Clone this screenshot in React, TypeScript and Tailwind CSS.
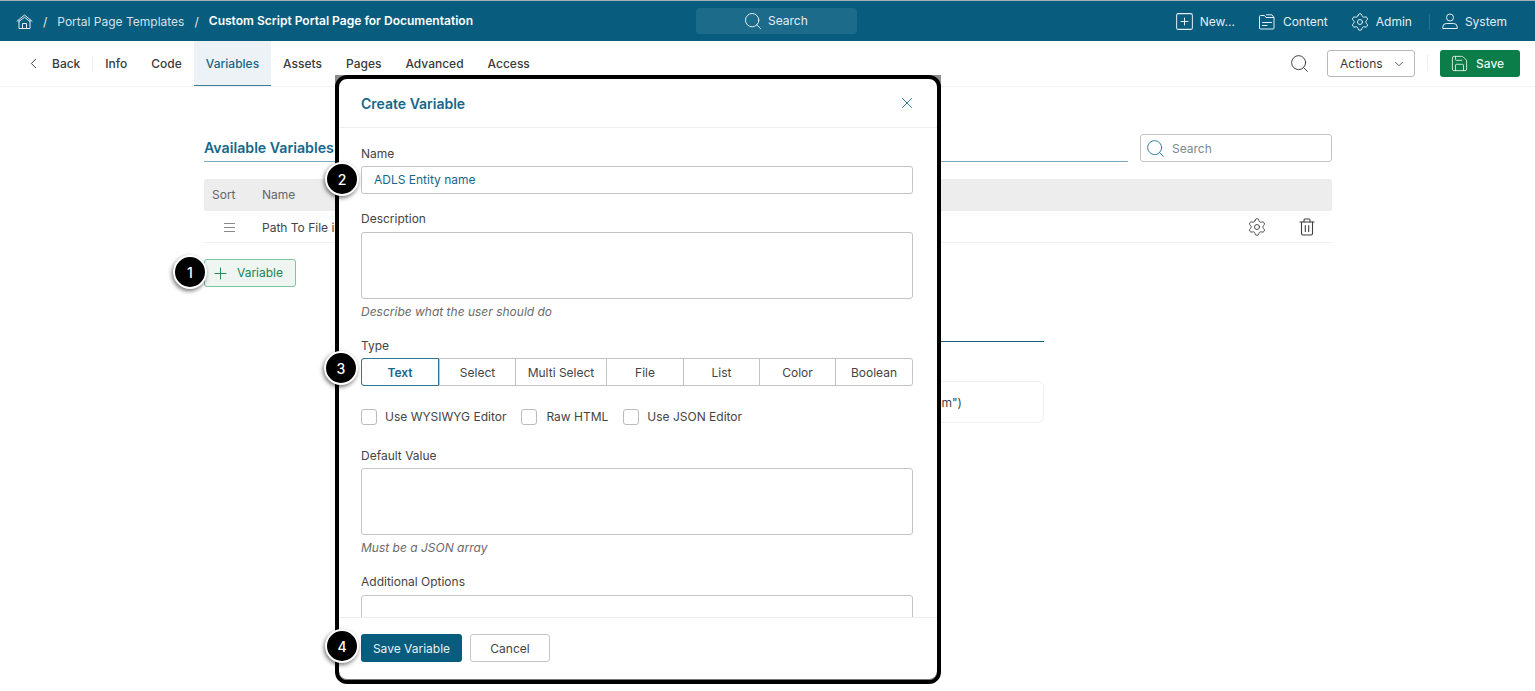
import React from "react";
import { ChevronDown, ChevronLeft, Plus, Save, Search, Settings, SquarePlus, X } from "lucide-react";

function HomeIcon() {
  return (
    <svg width="17" height="16" viewBox="0 0 17 16" fill="none" stroke="currentColor" strokeWidth="1" strokeLinejoin="round" strokeLinecap="round">
      <path d="M1 7.2 8.5 1 16 7.2" />
      <path d="M3 7.6 8.5 3.2 14 7.6" />
      <path d="M3 6.5V14.5H14V6.5" />
      <path d="M6.5 14.5V9.5H10.5V14.5" />
    </svg>
  );
}

function ContentIcon() {
  return (
    <svg width="16" height="16" viewBox="0 0 16 16" fill="none" stroke="currentColor" strokeWidth="1" strokeLinejoin="round" strokeLinecap="round" className="ml-6">
      <path d="M.5 14V2.5a1 1 0 0 1 1-1h4l1.5 2h8v10.5a1 1 0 0 1-1 1h-12.5a1 1 0 0 1-1-1Z" />
      <path d="M7.5 .8h5.5l2 2.7" />
      <path d="M3.5 8.5h9M3.5 11.5h4.5" />
    </svg>
  );
}

function UserIcon() {
  return (
    <svg width="16" height="17" viewBox="0 0 16 17" fill="none" stroke="currentColor" strokeWidth="1" strokeLinejoin="round" className="ml-3">
      <circle cx="8" cy="4.5" r="3.5" />
      <path d="M.8 15.5v-1.5a3.5 3.5 0 0 1 3.5-3.5h7.4a3.5 3.5 0 0 1 3.5 3.5v1.5Z" />
    </svg>
  );
}

function TrashIcon() {
  return (
    <svg width="16" height="18" viewBox="0 0 16 18" fill="none" stroke="currentColor" strokeWidth="1.1" strokeLinejoin="round" strokeLinecap="round">
      <path d="M1 4h14" />
      <path d="M5 4V2a1 1 0 0 1 1-1h4a1 1 0 0 1 1 1v2" />
      <path d="M2.5 4v11.5a1.5 1.5 0 0 0 1.5 1.5h8a1.5 1.5 0 0 0 1.5-1.5V4" />
      <path d="M6.3 7.5v6M9.7 7.5v6" />
    </svg>
  );
}

function Badge({ n, className }: { n: string; className: string }) {
  return (
    <div className={"absolute flex h-[34px] w-[34px] items-center justify-center rounded-full border-2 border-white bg-black text-[14px] font-medium text-white shadow-[-1px_2px_4px_rgba(0,0,0,0.55)] " + className}>
      {n}
    </div>
  );
}

function TopBar() {
  return (
    <div className="flex h-[41px] items-center border-t border-[#a9b1b4] bg-[#085c7e] text-[12px] text-[#e4edf1]">
      <div className="flex w-[696px] shrink-0 items-center pl-4 pt-px">
        <HomeIcon />
        <span className="ml-[10px]">/</span>
        <span className="ml-[10px] text-[#d4e2e8]">Portal Page Templates</span>
        <span className="ml-[10px]">/</span>
        <span className="ml-[10px] text-[12.05px] font-semibold text-white">Custom Script Portal Page for Documentation</span>
      </div>
      <div className="flex h-[26px] w-[161px] items-center gap-[5px] rounded bg-[#1d6b8b] pl-[47px]">
        <Search size={20} strokeWidth={1.2} />
        <span>Search</span>
      </div>
      <div className="flex flex-1 items-center justify-end pr-[28px] pt-px">
        <SquarePlus size={21} strokeWidth={1.15} />
        <span className="ml-[5px]">New...</span>
        <ContentIcon />
        <span className="ml-2">Content</span>
        <Settings size={20} strokeWidth={1.2} className="ml-[22px]" />
        <span className="ml-[6px]">Admin</span>
        <span className="ml-[17px] h-4 w-px bg-[#2b7291]" />
        <UserIcon />
        <span className="ml-[7px]">System</span>
      </div>
    </div>
  );
}

function Tab({ label, active }: { label: string; active?: boolean }) {
  return (
    <div className={"flex h-full items-center border-b px-3 pt-[2px] " + (active ? "border-[#3d7f9c] bg-[#edf2f6] text-[#17678a]" : "border-transparent")}>
      {label}
    </div>
  );
}

function TabBar() {
  return (
    <div className="flex h-[46px] items-center border-b border-[#f1f1f1] bg-white text-[12px] font-medium text-[#3a3a3a]">
      <ChevronLeft size={17} strokeWidth={1.4} className="ml-[25px]" />
      <span className="ml-[10px] pt-px">Back</span>
      <span className="ml-[12px] h-4 w-px bg-[#eeeeee]" />
      <Tab label="Info" />
      <Tab label="Code" />
      <Tab label="Variables" active />
      <Tab label="Assets" />
      <Tab label="Pages" />
      <Tab label="Advanced" />
      <Tab label="Access" />
      <div className="mb-px flex flex-1 items-center justify-end pr-[15px] font-normal">
        <Search size={21} strokeWidth={1.1} />
        <div className="ml-[17px] flex h-[27px] w-[88px] items-center gap-[9px] rounded-[3px] border border-[#b8b8b8] pl-3 pt-px">
          Actions
          <ChevronDown size={14} strokeWidth={1.4} />
        </div>
        <span className="ml-3 h-4 w-px bg-[#eeeeee]" />
        <div className="ml-3 flex h-[27px] w-[80px] items-center gap-[7px] rounded-[3px] bg-[#0b7d49] pl-[10px] pt-px font-medium text-[#eaf5ef]">
          <Save size={19} strokeWidth={1.1} />
          Save
        </div>
      </div>
    </div>
  );
}

function Background() {
  return (
    <div className="ml-[204px] w-[1128px] pt-[47px] text-[12px] text-[#444444]">
      <div className="flex items-start gap-3">
        <div className="flex h-7 flex-1 items-center border-b border-[#7fa9bd] pt-px text-[14.2px] font-semibold text-[#17678a]">Available Variables</div>
        <div className="flex h-7 w-[192px] items-center gap-[6px] rounded-[3px] border border-[#c4c4c4] pl-1 pt-px text-[#7b8a92]">
          <Search size={21} strokeWidth={1.1} className="text-[#2e7a99]" />
          Search
        </div>
      </div>
      <div className="mt-[17px] flex h-8 items-center rounded-[2px] bg-[#ededed] text-[#666666]">
        <span className="ml-2 w-[50px]">Sort</span>
        <span>Name</span>
      </div>
      <div className="flex h-8 items-center border-b border-[#f1f1f1] pt-px">
        <div className="ml-[20px] flex w-[38px] flex-col gap-[3px]">
          <span className="h-px w-[11px] bg-[#8a8a8a]" />
          <span className="h-px w-[11px] bg-[#8a8a8a]" />
          <span className="h-px w-[11px] bg-[#8a8a8a]" />
        </div>
        <span className="pt-px">Path To File in</span>
        <div className="ml-auto flex items-center gap-[32px] pr-[17px] text-[#3f3f3f]">
          <Settings size={20} strokeWidth={1.1} />
          <TrashIcon />
        </div>
      </div>
      <div className="mt-4 flex h-7 w-[92px] items-center gap-[7px] rounded-[3px] border border-[#7fc3a1] bg-[#eff6f2] pl-[6px] text-[#1c8553]">
        <Plus size={19} strokeWidth={1.2} />
        Variable
      </div>
      <div className="ml-[200px] w-[640px]">
        <div className="mt-[54px] h-px bg-[#1c5f7d]" />
        <div className="mt-[39px] flex h-[42px] items-center justify-end rounded-md border border-[#f0f0f0] pr-[81px] pt-px">om")</div>
      </div>
    </div>
  );
}

function Field({ label, children, help, helpGap }: { label: string; children: React.ReactNode; help?: string; helpGap?: string }) {
  return (
    <div>
      <div className="text-[12px] leading-4 text-[#444444]">{label}</div>
      {children}
      {help && <div className={"text-[12px] italic leading-4 text-[#6b6b6b] " + (helpGap ?? "")}>{help}</div>}
    </div>
  );
}

function Seg({ label, active, w }: { label: string; active?: boolean; w: string }) {
  return (
    <div className={"flex items-center justify-center pt-px " + w + (active ? " -my-px -ml-px rounded-l-[3px] border border-[#2f7896] font-semibold text-[#17678a]" : " border-l border-[#c4c4c4]")}>
      {label}
    </div>
  );
}

function Check({ label, className }: { label: string; className: string }) {
  return (
    <div className={"flex items-center " + className}>
      <span className="h-4 w-4 rounded-[3px] border border-[#bdbdbd]" />
      {label}
    </div>
  );
}

function Modal() {
  return (
    <div className="absolute left-[335px] top-[75px] flex h-[609px] w-[606px] flex-col overflow-hidden rounded-[12px] border-4 border-black bg-white text-[12px] text-[#444444] shadow-[inset_0_-1px_0_#777777]">
      <div className="flex h-[49px] shrink-0 items-center justify-between border-b border-[#eeeeee] pl-[22px] pr-[21px]">
        <span className="text-[14px] font-semibold text-[#17678a]">Create Variable</span>
        <X size={18} strokeWidth={1.3} className="text-[#2f7f9f]" />
      </div>
      <div className="min-h-0 flex-1 overflow-hidden pl-[22px] pr-6 pt-[18px]">
        <Field label="Name">
          <div className="mt-1 flex h-7 items-center rounded-[3px] border border-[#c4c4c4] pl-3 text-[#17678a]">ADLS Entity name</div>
        </Field>
        <div className="mt-[17px]">
          <Field label="Description" help="Describe what the user should do" helpGap="mt-[5px]">
            <div className="mt-[5px] h-[67px] rounded-[3px] border border-[#c4c4c4]" />
          </Field>
        </div>
        <div className="mt-[18px]">
          <Field label="Type">
            <div className="mt-1 flex h-7 rounded-[3px] border border-[#c4c4c4] text-[#444444]">
              <Seg label="Text" active w="w-[78px]" />
              <Seg label="Select" w="w-[76px]" />
              <Seg label="Multi Select" w="w-[91px]" />
              <Seg label="File" w="w-[77px]" />
              <Seg label="List" w="w-[76px]" />
              <Seg label="Color" w="w-[76px]" />
              <Seg label="Boolean" w="flex-1" />
            </div>
          </Field>
        </div>
        <div className="mt-[22px] flex items-center">
          <Check label="Use WYSIWYG Editor" className="gap-2" />
          <Check label="Raw HTML" className="ml-[15px] gap-[9px]" />
          <Check label="Use JSON Editor" className="ml-[15px] gap-2" />
        </div>
        <div className="mt-[22px]">
          <Field label="Default Value" help="Must be a JSON array" helpGap="mt-[5px]">
            <div className="mt-1 h-[67px] rounded-[3px] border border-[#c4c4c4]" />
          </Field>
        </div>
        <div className="mt-[18px]">
          <Field label="Additional Options">
            <div className="mt-[5px] h-[60px] rounded-[3px] border border-[#c4c4c4]" />
          </Field>
        </div>
      </div>
      <div className="flex h-[63px] shrink-0 items-center gap-2 border-t border-[#eeeeee] pb-[2px] pl-[22px]">
        <div className="flex h-7 w-[101px] items-center justify-center rounded-[3px] bg-[#085c7e] pt-px text-[#e9f1f4]">Save Variable</div>
        <div className="flex h-7 w-[80px] items-center justify-center rounded-[3px] border border-[#c4c4c4] pt-px">Cancel</div>
      </div>
    </div>
  );
}

export default function App() {
  return (
    <div className="relative h-[691px] w-[1535px] overflow-hidden bg-white font-['Inter',sans-serif]">
      <TopBar />
      <TabBar />
      <Background />
      <div className="absolute left-[335px] top-[75px] h-3 w-3 bg-[#8c8c8c]" />
      <div className="absolute left-[929px] top-[75px] h-3 w-3 bg-[#8c8c8c]" />
      <Modal />
      <Badge n="1" className="left-[173px] top-[255px]" />
      <Badge n="2" className="left-[325px] top-[162px]" />
      <Badge n="3" className="left-[324px] top-[351px]" />
      <Badge n="4" className="left-[325px] top-[629px]" />
    </div>
  );
}
